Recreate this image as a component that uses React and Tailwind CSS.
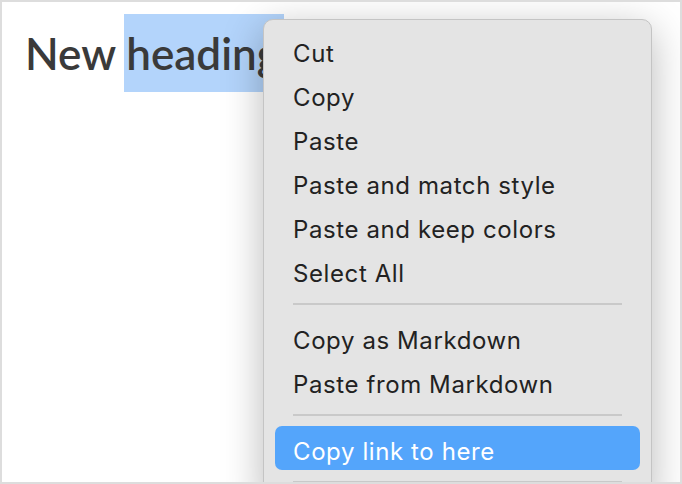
export default function App() {
  const groups = [
    ['Cut', 'Copy', 'Paste', 'Paste and match style', 'Paste and keep colors', 'Select All'],
    ['Copy as Markdown', 'Paste from Markdown'],
    ['Copy link to here'],
  ];
  const active = 'Copy link to here';

  return (
    <div className="relative w-[682px] h-[484px] overflow-hidden bg-white border-2 border-[#dddddd]">
      <div className="pt-[12px] pl-[23px] text-[44px] leading-[78px] font-semibold text-[#3a3a3a] font-['Lato',sans-serif] whitespace-nowrap">
        New <span className="inline-block bg-[#b3d4fb] leading-[78px] pr-[4px] -ml-[2px] pl-[2px]">heading</span>
      </div>

      {/* context menu */}
      <div className="absolute left-[261px] top-[17px] w-[389px] pt-[8px] pb-[10px] bg-[#e4e4e4] border border-[#c4c4c4] rounded-[10px] shadow-[0_10px_40px_rgba(0,0,0,0.28)] font-['Inter',sans-serif] text-[24px] tracking-[0.6px] text-[#222222]">
        {groups.map((items, gi) => (
          <div key={gi}>
            {gi > 0 && (
              <div className="h-[23px] flex items-center px-[29px]">
                <div className="h-[2px] w-full bg-[#c9c9c9]" />
              </div>
            )}
            {items.map(item => (
              <div key={item} className="px-[11px]">
                <div
                  className={
                    item === active
                      ? 'h-[44px] flex items-center pt-[7px] pl-[18px] rounded-[7px] bg-[#54a5fb] text-white'
                      : 'h-[44px] flex items-center pt-[7px] pl-[18px]'
                  }
                >
                  {item}
                </div>
              </div>
            ))}
          </div>
        ))}
        <div className="h-[23px] flex items-center px-[29px]">
          <div className="h-[2px] w-full bg-[#c9c9c9]" />
        </div>
      </div>
    </div>
  );
}
